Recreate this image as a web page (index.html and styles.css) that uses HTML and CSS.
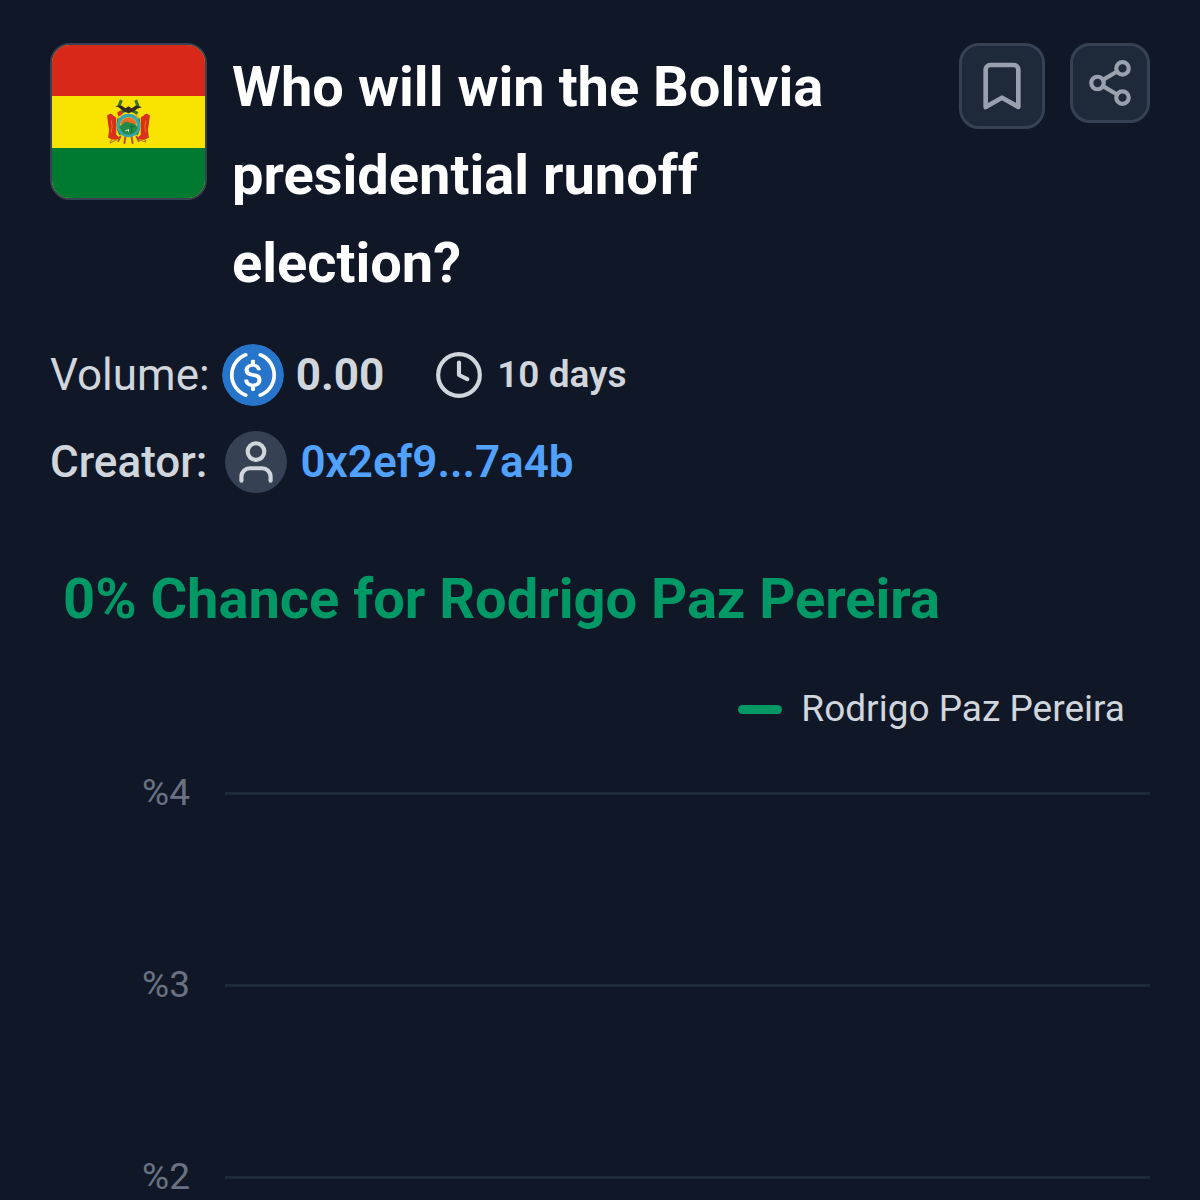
FILE: index.html
```html
<!DOCTYPE html>
<html lang="en">
<head>
<meta charset="utf-8">
<meta name="viewport" content="width=device-width, initial-scale=1">
<title>Who will win the Bolivia presidential runoff election?</title>
<link rel="stylesheet" href="styles.css">
</head>
<body>
<main class="market">
  <header class="market-header">
    <svg class="flag" viewBox="0 0 150 150" role="img" aria-label="Flag of Bolivia">
      <rect width="150" height="150" fill="#f9e300"/>
      <rect width="150" height="50" fill="#d72819"/>
      <rect y="101" width="150" height="49" fill="#007a31"/>
      <g fill="none" stroke-linecap="round">
        <path d="M61 90l-4 5M63 93l-6 3M87 90l5 4M85 93l7 2" stroke="#b8782e" stroke-width="1"/>
        <path d="M72 90l-1 6M78 90l1 6M67 90l-2 4M83 90l2 4" stroke="#b5522b" stroke-width="2"/>
      </g>
      <path d="M54 69q4-3 6 0l3 2v17q3 2 3 4-5 2-11-1l1-8-1-6z" fill="#d9301c"/>
      <path d="M96 69q-4-3-6 0l-3 2v17q-3 2-3 4 5 2 11-1l-1-8 1-6z" fill="#d9301c"/>
      <path d="M65 69q-3 10 1 19l3 2V67z" fill="#f2b51b"/>
      <path d="M85 69q3 10-1 19l-3 2V67z" fill="#f2b51b"/>
      <path d="M65 72q-2 10 2 16M85 72q2 10-2 16" fill="none" stroke="#26804a" stroke-width="2"/>
      <path d="M58 74l1 6-1 6M92 74l-1 6 1 6" fill="none" stroke="#ef6d1d" stroke-width="1"/>
      <path d="M68 54l-2 5 5 6M82 54l2 5-5 6M66 67l6-3M84 67l-6-3" fill="none" stroke="#397323" stroke-width="3"/>
      <path d="M62 60q6-2 10 2l3-2 3 2q5-4 10-1-5 1-8 4l-5 2-5-2q-3-4-8-5z" fill="#342a20"/>
      <path d="M64 66l4-2 1 4-4 2z" fill="#d9301c"/>
      <circle cx="75" cy="79" r="10" fill="#e4bd31" stroke="#35a7b4" stroke-width="3"/>
      <path d="M67 77q3-6 8-6t8 6l-8 2z" fill="#ef6b23"/>
      <path d="M66 80l6-5 4 1 6 2 2 3q-2 7-9 7t-9-8z" fill="#258b45"/>
      <path d="M72 84l3-1v2" stroke="#dce8ce" stroke-width="1" fill="none"/>
      <path d="M78 78v8M76 80h5" stroke="#126c38" stroke-width="1"/>
    </svg>
    <h1 class="market-title">Who will win the Bolivia presidential runoff election?</h1>
    <div class="actions">
      <button class="icon-button" type="button" aria-label="Bookmark">
        <svg class="icon icon-large" viewBox="0 0 24 24"><path d="m19 21-7-4-7 4V5a2 2 0 0 1 2-2h10a2 2 0 0 1 2 2v16z"/></svg>
      </button>
      <button class="icon-button" type="button" aria-label="Share">
        <svg class="icon" viewBox="0 0 24 24"><circle cx="18" cy="5" r="3"/><circle cx="6" cy="12" r="3"/><circle cx="18" cy="19" r="3"/><path d="M8.59 13.51l6.83 3.98M15.41 6.51l-6.82 3.98"/></svg>
      </button>
    </div>
  </header>

  <section class="details" aria-label="Market details">
    <div class="detail-row">
      <span>Volume:</span>
      <svg class="badge" viewBox="0 0 2000 2000" role="img" aria-label="USDC"><circle cx="1000" cy="1000" r="1000" fill="#2775ca"/><path fill="#fff" d="M1275 1158.33c0-145.83-87.5-195.83-262.5-216.66-125-16.67-150-50-150-108.34s41.67-95.83 125-95.83c75 0 116.67 25 137.5 87.5 4.17 12.5 16.67 20.83 29.17 20.83h66.66c16.67 0 29.17-12.5 29.17-29.16v-4.17c-16.67-91.67-91.67-162.5-187.5-170.83v-100c0-16.67-12.5-29.17-33.33-33.34h-62.5c-16.67 0-29.17 12.5-33.34 33.34v95.83c-125 16.67-204.16 100-204.16 204.17 0 137.5 83.33 191.66 258.33 212.5 116.67 20.83 154.17 45.83 154.17 112.5s-58.34 112.5-137.5 112.5c-108.34 0-145.84-45.84-158.34-108.34-4.16-16.66-16.66-25-29.16-25h-70.84c-16.66 0-29.16 12.5-29.16 29.17v4.17c16.66 104.16 83.33 179.16 220.83 200v100c0 16.66 12.5 29.16 33.33 33.33h62.5c16.67 0 29.17-12.5 33.34-33.33v-100c125-20.84 208.33-108.34 208.33-220.84z"/><path fill="none" stroke="#fff" stroke-width="120" stroke-linecap="round" d="M765 350a695 695 0 0 0 0 1300M1235 350a695 695 0 0 1 0 1300"/></svg>
      <strong>0.00</strong>
      <span class="deadline">
        <svg class="icon" viewBox="0 0 24 24" aria-hidden="true"><circle cx="12" cy="12" r="10"/><path d="M12 6v6l4 2"/></svg>
        10 days
      </span>
    </div>
    <div class="detail-row">
      <span class="creator-label">Creator:</span>
      <a class="creator" href="#creator">
        <span class="badge avatar"><svg class="icon" viewBox="0 0 24 24" aria-hidden="true"><path d="M19 21v-2a4 4 0 0 0-4-4H9a4 4 0 0 0-4 4v2"/><circle cx="12" cy="7" r="4"/></svg></span>
        0x2ef9...7a4b
      </a>
    </div>
  </section>

  <section class="chance">
    <h2 class="chance-title">0% Chance for Rodrigo Paz Pereira</h2>
    <div class="legend"><span class="legend-mark"></span>Rodrigo Paz Pereira</div>
    <div class="chart">
      <div class="tick">%4</div>
      <div class="tick">%3</div>
      <div class="tick">%2</div>
    </div>
  </section>
</main>
</body>
</html>
```
FILE: styles.css
```css
* {
  box-sizing: border-box;
}

body {
  margin: 0;
  background: #101828;
  color: #d1d5dc;
  font-family: Roboto, "Liberation Sans", sans-serif;
}

.market {
  padding: 43px 50px 0;
}

.market-header {
  display: flex;
  align-items: flex-start;
  gap: 25px;
}

.flag {
  flex: none;
  width: 157px;
  height: 157px;
  border: 2px solid #364153;
  border-radius: 20px;
}

.market-title {
  flex: 1;
  margin: 0;
  color: #fff;
  font-size: 56px;
  font-weight: 700;
  line-height: 88px;
}

.actions {
  display: flex;
  align-items: flex-start;
  gap: 25px;
  margin-left: 60px;
}

.icon-button {
  display: flex;
  padding: 12px;
  border: 3px solid #364153;
  border-radius: 20px;
  background: #1e2939;
  color: #99a1af;
}

.icon {
  flex: none;
  width: 50px;
  height: 50px;
  fill: none;
  stroke: currentColor;
  stroke-width: 2;
  stroke-linecap: round;
  stroke-linejoin: round;
}

.icon-large {
  width: 56px;
  height: 56px;
}

.details {
  display: grid;
  gap: 25px;
  margin-top: 37px;
}

.detail-row {
  display: flex;
  align-items: center;
  gap: 12px;
  font-size: 44px;
  line-height: 62px;
}

.badge {
  flex: none;
  width: 62px;
  height: 62px;
  border-radius: 50%;
}

.deadline {
  display: flex;
  align-items: center;
  gap: 13px;
  margin-left: 38px;
  font-size: 37px;
  font-weight: 600;
}

.creator-label {
  margin-right: 6px;
  font-weight: 500;
}

.creator {
  display: flex;
  align-items: center;
  gap: 13px;
  color: #51a2ff;
  font-weight: 600;
  text-decoration: none;
}

.avatar {
  display: grid;
  place-items: center;
  background: #364153;
  color: #d1d5dc;
}

.chance {
  margin-top: 62px;
}

.chance-title {
  margin: 0;
  padding: 0 13px;
  color: #009966;
  font-size: 56px;
  font-weight: 700;
  line-height: 88px;
}

.legend {
  display: flex;
  align-items: center;
  justify-content: flex-end;
  gap: 19px;
  margin-top: 44px;
  padding-right: 25px;
  font-size: 37px;
  line-height: 44px;
}

.legend-mark {
  width: 44px;
  height: 9px;
  border-radius: 5px;
  background: #009966;
}

.chart {
  display: grid;
  gap: 148px;
  margin-top: 40px;
}

.tick {
  display: grid;
  grid-template-columns: 140px 1fr;
  align-items: center;
  gap: 35px;
  color: #6a7282;
  font-size: 37px;
  line-height: 44px;
  text-align: right;
}

.tick::after {
  content: "";
  height: 3px;
  background: #1e2939;
}
```
